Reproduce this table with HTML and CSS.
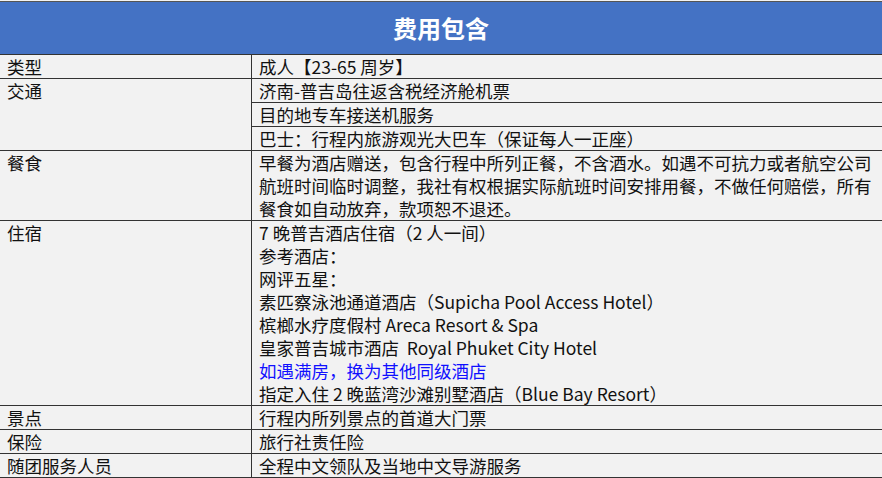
FILE: index.html
```html
<!DOCTYPE html>
<html lang="zh-CN">
<head>
<meta charset="utf-8">
<title>费用包含</title>
<link rel="stylesheet" href="styles.css">
</head>
<body>
<div class="sheet">
  <div class="title">费用包含</div>
  <div class="row">
    <div class="label">类型</div>
    <div class="value"><div class="line">成人【23-65 周岁】</div></div>
  </div>
  <div class="row">
    <div class="label">交通</div>
    <div class="value">
      <div class="line sub">济南-普吉岛往返含税经济舱机票</div>
      <div class="line sub">目的地专车接送机服务</div>
      <div class="line sub">巴士：行程内旅游观光大巴车（保证每人一正座）</div>
    </div>
  </div>
  <div class="row">
    <div class="label">餐食</div>
    <div class="value"><div class="line">早餐为酒店赠送，包含行程中所列正餐，不含酒水。如遇不可抗力或者航空公司<br>航班时间临时调整，我社有权根据实际航班时间安排用餐，不做任何赔偿，所有<br>餐食如自动放弃，款项恕不退还。</div></div>
  </div>
  <div class="row">
    <div class="label">住宿</div>
    <div class="value">
      <div class="line">7 晚普吉酒店住宿（2 人一间）</div>
      <div class="line">参考酒店：</div>
      <div class="line">网评五星：</div>
      <div class="line">素匹察泳池通道酒店（Supicha Pool Access Hotel）</div>
      <div class="line">槟榔水疗度假村 Areca Resort &amp; Spa</div>
      <div class="line">皇家普吉城市酒店&nbsp; Royal Phuket City Hotel</div>
      <div class="line note">如遇满房，换为其他同级酒店</div>
      <div class="line">指定入住 2 晚蓝湾沙滩别墅酒店（Blue Bay Resort）</div>
    </div>
  </div>
  <div class="row">
    <div class="label">景点</div>
    <div class="value"><div class="line">行程内所列景点的首道大门票</div></div>
  </div>
  <div class="row">
    <div class="label">保险</div>
    <div class="value"><div class="line">旅行社责任险</div></div>
  </div>
  <div class="row">
    <div class="label">随团服务人员</div>
    <div class="value"><div class="line">全程中文领队及当地中文导游服务</div></div>
  </div>
</div>
</body>
</html>
```
FILE: styles.css
```css
html, body {
  margin: 0;
  padding: 0;
  background: #f2f2f2;
}
body {
  font-family: "Noto Sans CJK SC", "Noto Sans", sans-serif;
  font-size: 17.5px;
  color: #111;
  overflow: hidden;
}
.sheet {
  margin-top: 1px;
  border-top: 1px solid #555;
  width: 900px;
}
.title {
  background: #4472c4;
  color: #fff;
  font-weight: bold;
  font-size: 24px;
  height: 52px;
  line-height: 52px;
  text-align: center;
  width: 882px;
  border-bottom: 1px solid #333;
}
.row {
  display: grid;
  grid-template-columns: 252px 1fr;
  border-bottom: 1px solid #333;
}
.label {
  border-right: 1px solid #333;
  padding-left: 7px;
  line-height: 23px;
}
.value {
  padding-left: 0;
}
.line {
  padding-left: 7px;
  line-height: 23px;
  white-space: nowrap;
}
.sub + .sub {
  border-top: 1px solid #333;
}
.note {
  color: #1010ff;
}
```
